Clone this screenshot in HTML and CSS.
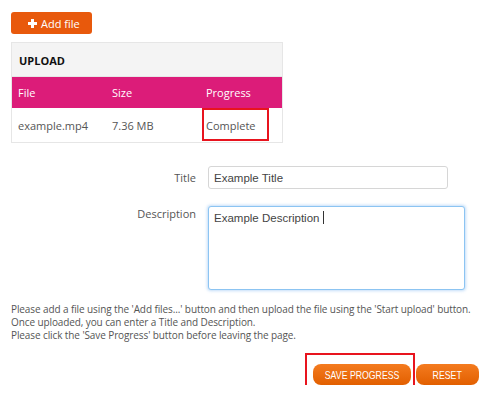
FILE: index.html
```html
<!DOCTYPE html>
<html>
<head>
<meta charset="utf-8">
<link rel="stylesheet" href="styles.css">
</head>
<body>
<div class="page">
  <div class="toolbar">
    <button class="btn-add" type="button">
      <svg class="plus" width="9" height="9" viewBox="0 0 9 9"><rect x="3" y="0" width="3" height="9" fill="#fff"/><rect x="0" y="3" width="9" height="3" fill="#fff"/></svg>
      <span>Add file</span>
    </button>
  </div>

  <div class="panel">
    <div class="panel-head">UPLOAD</div>
    <table class="files">
      <thead>
        <tr><th class="c1">File</th><th class="c2">Size</th><th>Progress</th></tr>
      </thead>
      <tbody>
        <tr><td>example.mp4</td><td>7.36 MB</td><td><span class="marked">Complete</span></td></tr>
      </tbody>
    </table>
  </div>

  <div class="form">
    <div class="row">
      <label class="lbl lbl-title">Title</label>
      <div class="input">Example Title</div>
    </div>
    <div class="row">
      <label class="lbl lbl-desc">Description</label>
      <div class="textarea">Example Description <span class="caret"></span></div>
    </div>
  </div>

  <p class="help">Please add a file using the 'Add files...' button and then upload the file using the 'Start upload' button.<br>Once uploaded, you can enter a Title and Description.<br>Please click the 'Save Progress' button before leaving the page.</p>

  <div class="actions">
    <span class="marked-btn"><button class="btn-o btn-save" type="button"><span class="narrow">SAVE PROGRESS</span></button></span>
    <button class="btn-o btn-reset" type="button"><span class="narrow">RESET</span></button>
  </div>
</div>
</body>
</html>
```

FILE: styles.css
```css
html, body { margin: 0; padding: 0; background: #fff; }
body { font-family: "Open Sans", "Liberation Sans", sans-serif; color: #555; }
.page { padding: 12px 11px 0 11px; width: 470px; }

.toolbar { height: 22px; }
.btn-add {
  display: flex; align-items: center; gap: 4px;
  height: 22px; width: 81px; padding: 0 0 0 17px; margin: 0;
  border: 0; border-radius: 3px;
  background: #e8590c; color: #fff;
  font-family: "Open Sans", sans-serif; font-size: 11px;
  box-sizing: border-box;
}
.plus { display: block; }

.panel { margin-top: 8px; width: 272px; border: 1px solid #e6e6e6; box-sizing: border-box; }
.panel-head {
  height: 34px; background: #f4f4f4; box-sizing: border-box;
  padding: 10px 0 0 7px;
  font-weight: 700; font-size: 11px; color: #111;
  border-bottom: 1px solid #e6e6e6;
}
.files { width: 100%; border-collapse: collapse; font-size: 11px; }
.files th {
  background: #dc1c79; color: #fff; font-weight: 400; text-align: left;
  height: 31px; padding: 0 0 0 6px; box-sizing: border-box;
}
.files th.c1, .files th.c2 { width: 94px; }
.files td { height: 34px; padding: 0 0 0 6px; color: #555; }
.marked { position: relative; }
.marked::after {
  content: ""; position: absolute;
  left: -4px; top: -10px; width: 63px; height: 29px;
  border: 2px solid #e8141e;
}

.form { margin-top: 23px; }
.row { display: flex; align-items: flex-start; }
.row + .row { margin-top: 17px; }
.lbl { width: 185px; text-align: right; font-size: 11px; color: #555; }
.lbl-title { padding-top: 4px; }
.lbl-desc { padding-top: 0px; }
.input, .textarea {
  margin-left: 12px; box-sizing: border-box; background: #fff;
  font-family: "Liberation Sans", Arial, sans-serif; font-size: 11.5px; color: #444;
  border-radius: 3px; padding: 5px 5px;
}
.input { width: 240px; height: 23px; border: 1px solid #d6d6d6; }
.textarea {
  width: 257px; height: 84px; border: 1px solid #8cc4f2;
  box-shadow: 0 0 3px 1px rgba(120, 180, 240, 0.45);
  padding-top: 4px;
}
.caret { display: inline-block; width: 1px; height: 13px; background: #333; vertical-align: -2px; }

.help { margin: 13px 0 0 0; font-size: 10px; line-height: 13px; color: #555; white-space: nowrap; letter-spacing: -0.1px; }

.actions { margin-top: 22px; display: flex; justify-content: flex-end; padding-right: 2px; gap: 5px; }
.btn-o {
  height: 21px; margin: 0; border: 0; border-radius: 8px;
  background: linear-gradient(#f47b1f, #e25f00);
  color: #fff; font-family: "Liberation Sans", Arial, sans-serif; font-size: 11.5px;
  padding: 0; display: flex; align-items: center; justify-content: center;
}
.narrow { display: inline-block; transform: scaleX(0.76); white-space: nowrap; }
.btn-save { width: 98px; }
.btn-reset { width: 63px; }
.marked-btn { position: relative; display: block; }
.marked-btn::after {
  content: ""; position: absolute;
  left: -8px; top: -11px; width: 106px; height: 35px;
  border: 2px solid #e8141e;
}
```
